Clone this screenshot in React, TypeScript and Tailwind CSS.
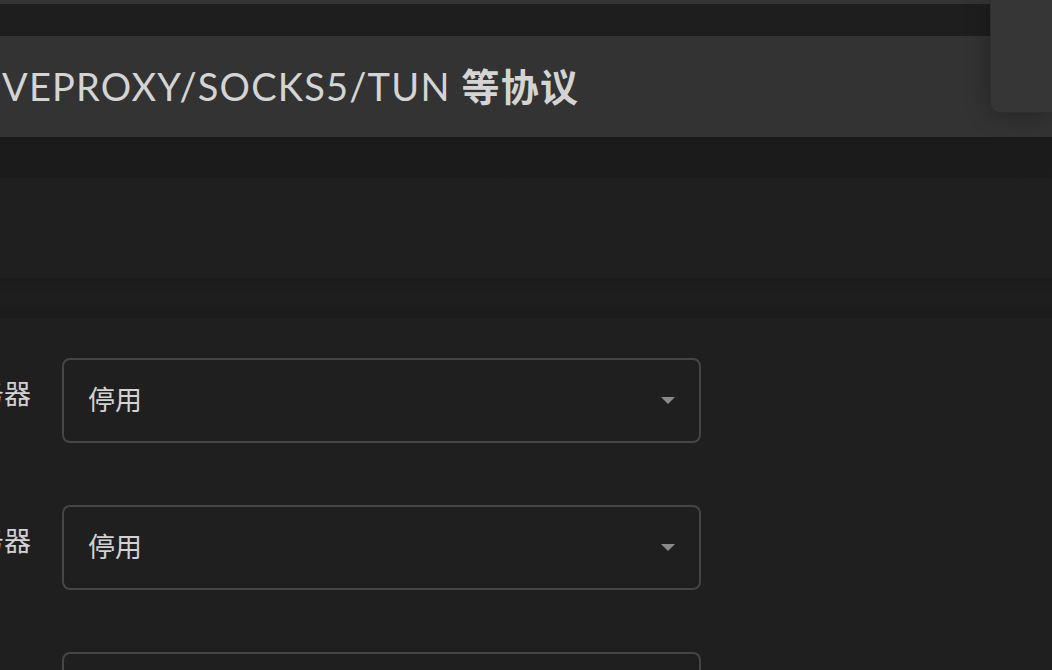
const rows = [
  { label: "代理服务器", value: "停用" },
  { label: "解析服务器", value: "停用" },
  { label: "规则服务器", value: "停用" },
];

function Caret() {
  return (
    <svg width="14" height="8" viewBox="0 0 14 8" className="shrink-0">
      <path d="M0 0 L14 0 L7 7 Z" fill="#8a8a8a" />
    </svg>
  );
}

function SelectRow({ label, value }: { label: string; value: string }) {
  return (
    <div className="flex items-start">
      <div className="flex w-[31px] shrink-0 justify-end overflow-hidden whitespace-nowrap pt-[19px] text-[27px] leading-[34px] text-[#d2d2d2]">
        {label}
      </div>
      <div className="ml-[31px] flex h-[85px] w-[639px] items-center justify-between rounded-[8px] border-2 border-[#454545] bg-[#1f1f1f] pl-[24px] pr-[24px]">
        <span className="text-[27px] text-[#d2d2d2]">{value}</span>
        <Caret />
      </div>
    </div>
  );
}

export default function App() {
  return (
    <div
      className="relative h-[670px] w-[1052px] overflow-hidden bg-[#1f1f1f]"
      style={{ fontFamily: 'Lato, "Noto Sans CJK SC", sans-serif' }}
    >
      <div className="h-[4px] bg-[#343434]" />
      <div className="h-[32px] bg-[#1e1e1e]" />
      <div className="flex h-[101px] items-center bg-[#333333] pl-[2px]">
        <h1 className="whitespace-nowrap text-[38px] font-normal tracking-[1.2px] text-[#d4d4d4]">
          VEPROXY/SOCKS5/TUN <span className="font-bold">等协议</span>
        </h1>
      </div>
      <div className="h-[41px] bg-gradient-to-b from-[#1a1a1a] to-[#1c1c1c]" />
      <div className="h-[100px] bg-[#1f1f1f]" />
      <div className="h-[40px] bg-gradient-to-b from-[#1b1b1b] via-[#1e1e1e] to-[#1b1b1b]" />
      <div className="flex flex-col gap-[62px] pt-[40px]">
        {rows.map((r) => (
          <SelectRow key={r.label} label={r.label} value={r.value} />
        ))}
      </div>
      <div className="absolute right-0 top-0 h-[113px] w-[62px] rounded-bl-[10px] border-l border-b border-[#2e2e2e] bg-[#363636] shadow-[0_0_24px_rgba(0,0,0,0.35)]" />
    </div>
  );
}
